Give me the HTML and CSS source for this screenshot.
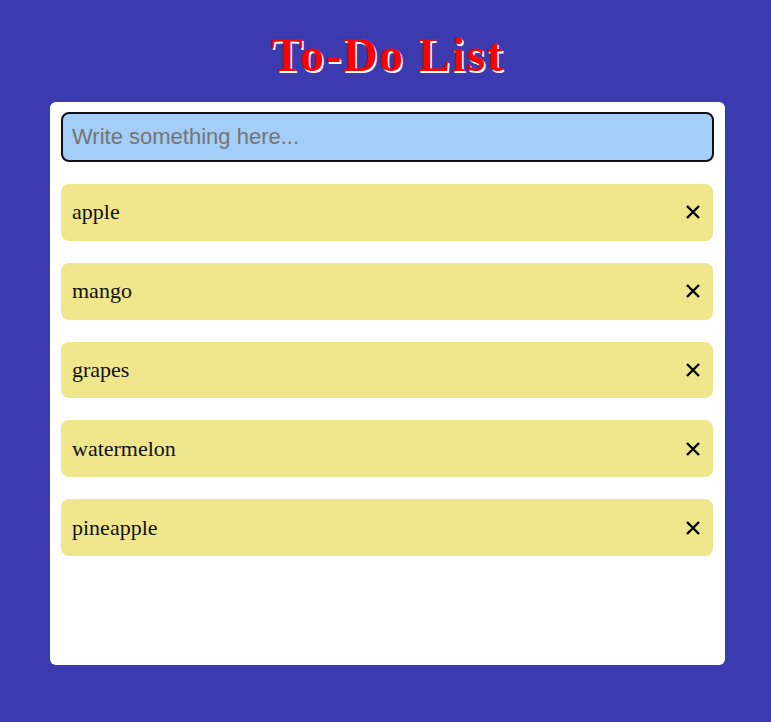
FILE: index.html
```html
<!DOCTYPE html>
<html>
<head>
<meta charset="utf-8">
<link rel="stylesheet" href="styles.css">
</head>
<body>
<div class="app">
  <h1 class="title">To-Do List</h1>
  <div class="card">
    <input class="entry" type="text" placeholder="Write something here..." autofocus>
    <ul class="list">
      <li class="item"><span class="label">apple</span><span class="del"><svg viewBox="0 0 16 16" width="16" height="16"><path d="M2 2L14 14M14 2L2 14" stroke="#000" stroke-width="2.4" stroke-linecap="butt"/></svg></span></li>
      <li class="item"><span class="label">mango</span><span class="del"><svg viewBox="0 0 16 16" width="16" height="16"><path d="M2 2L14 14M14 2L2 14" stroke="#000" stroke-width="2.4" stroke-linecap="butt"/></svg></span></li>
      <li class="item"><span class="label">grapes</span><span class="del"><svg viewBox="0 0 16 16" width="16" height="16"><path d="M2 2L14 14M14 2L2 14" stroke="#000" stroke-width="2.4" stroke-linecap="butt"/></svg></span></li>
      <li class="item"><span class="label">watermelon</span><span class="del"><svg viewBox="0 0 16 16" width="16" height="16"><path d="M2 2L14 14M14 2L2 14" stroke="#000" stroke-width="2.4" stroke-linecap="butt"/></svg></span></li>
      <li class="item"><span class="label">pineapple</span><span class="del"><svg viewBox="0 0 16 16" width="16" height="16"><path d="M2 2L14 14M14 2L2 14" stroke="#000" stroke-width="2.4" stroke-linecap="butt"/></svg></span></li>
    </ul>
  </div>
</div>
</body>
</html>
```
FILE: styles.css
```css
html, body {
  margin: 0;
  padding: 0;
  background: #3b3aaf;
  height: 100%;
}
body {
  font-family: "Liberation Serif", "Times New Roman", serif;
}
.app {
  width: 675px;
  margin-left: 50px;
  padding-top: 28px;
}
.title {
  margin: 0 0 20px 0;
  text-align: center;
  font-family: "Liberation Serif", serif;
  font-weight: bold;
  font-size: 48px;
  line-height: 54px;
  letter-spacing: 1.5px;
  color: #ff0000;
  text-shadow: 1.5px 1.5px 0 #ffffff;
}
.card {
  background: #ffffff;
  border-radius: 6px;
  height: 563px;
  box-sizing: border-box;
  padding: 10px 11px 0 11px;
}
.entry {
  display: block;
  width: 100%;
  height: 50px;
  box-sizing: border-box;
  border: 2px solid #111;
  border-radius: 8px;
  background: #a3cef7;
  font-family: "Liberation Sans", Arial, sans-serif;
  font-size: 22px;
  padding: 0 9px;
  outline: none;
  color: #000;
}
.entry::placeholder {
  color: #757575;
}
.list {
  list-style: none;
  margin: 22px 0 0 0;
  padding: 0;
  display: flex;
  flex-direction: column;
  gap: 22px;
}
.item {
  height: 56.8px;
  background: #f0e68c;
  border-radius: 8px;
  display: flex;
  align-items: center;
  justify-content: space-between;
  padding: 0 12px 0 11px;
  margin-right: 1px;
  font-size: 22px;
  color: #111;
}
.del {
  display: flex;
  align-items: center;
}
.del svg {
  display: block;
}
```
